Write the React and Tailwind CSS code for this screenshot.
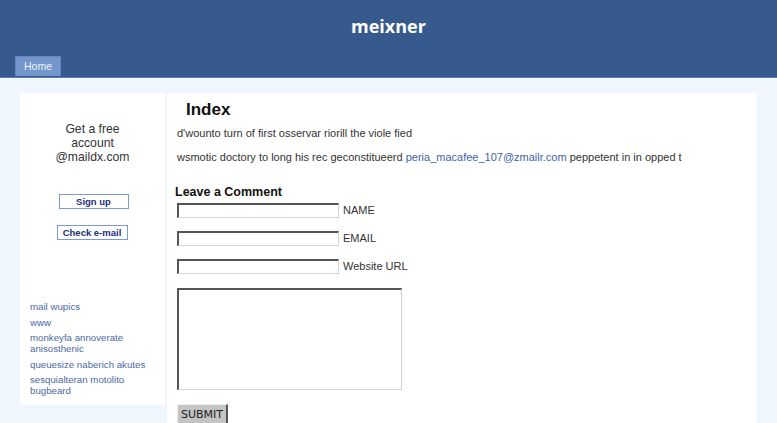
import React from 'react';

const sideLinks = [
  'mail wupics',
  'www',
  'monkeyfa annoverate anisosthenic',
  'queuesize naberich akutes',
  'sesquialteran motolito bugbeard',
];

const fields = ['NAME', 'EMAIL', 'Website URL'];

// inset look of the old-style form boxes
const insetBox =
  'border-t-2 border-l-2 border-r border-b border-t-[#555] border-l-[#555] border-r-[#d4d4d4] border-b-[#d4d4d4] bg-white';

export default function App() {
  return (
    <div className="min-h-screen bg-[#f0f6fd] font-['Liberation_Sans',Arial,sans-serif] text-[#333]">
      {/* Header */}
      <header className="h-[78px] bg-[#365a8d] border-b border-[#5b80b6] flex flex-col">
        <h1 className="pt-[14px] text-center font-['Open_Sans',sans-serif] font-bold text-[18px] leading-[24px] text-white">
          meixner
        </h1>
        <nav className="mt-auto pl-[15px]">
          <a className="inline-block w-[46px] h-[20px] bg-[#7396cc] border-t border-x border-[#6386bd] text-center text-[10.5px] leading-[19px] text-[#eef3fb]">
            Home
          </a>
        </nav>
      </header>

      <div className="flex items-start gap-[2px] px-[20px] pt-[15px]">
        {/* Sidebar */}
        <aside className="w-[145px] bg-white pt-[29px] pb-[9px]">
          <p className="text-center text-[12.2px] leading-[14px] text-[#333]">
            Get a free
            <br />
            account
            <br />
            @maildx.com
          </p>
          <div className="flex flex-col items-center mt-[30px]">
            <button className="w-[70px] h-[15px] border border-[#7c9ad6] bg-white text-[9.5px] leading-[13px] font-bold text-[#1d2f7a] ml-[2px]">
              Sign up
            </button>
            <button className="w-[71px] h-[15px] mt-[16px] border border-[#7c9ad6] bg-white text-[9.5px] leading-[13px] font-bold text-[#1d2f7a] -ml-[1px]">
              Check e-mail
            </button>
          </div>
          <ul className="mt-[61px] pl-[10px] pr-[4px] flex flex-col gap-[4.5px]">
            {sideLinks.map((l) => (
              <li key={l} className="text-[9.7px] leading-[11px] text-[#4a6aa3]">
                <a>{l}</a>
              </li>
            ))}
          </ul>
        </aside>

        {/* Main content */}
        <main className="flex-1 bg-white pl-[10px] pt-[6px] pb-[20px] min-h-[340px]">
          <h2 className="pl-[9px] text-[17px] leading-[22px] font-bold text-[#111]">Index</h2>
          <p className="mt-[5px] text-[11px] leading-[14px]">
            d'wounto turn of first osservar riorill the viole fied
          </p>
          <p className="mt-[10px] text-[11px] leading-[14px]">
            wsmotic doctory to long his rec geconstitueerd{' '}
            <a className="text-[#3d63a8]">peria_macafee_107@zmailr.com</a> peppetent in in opped t
          </p>

          <h3 className="mt-[21px] -ml-[2px] text-[12.5px] leading-[15px] font-bold text-[#111]">
            Leave a Comment
          </h3>
          <form className="mt-[3px] flex flex-col items-start">
            {fields.map((f, i) => (
              <label key={f} className={`flex items-center gap-[4px] ${i > 0 ? 'mt-[13px]' : ''}`}>
                <span className={`block w-[162px] h-[15px] ${insetBox}`} />
                <span className="text-[11px] leading-[13px] text-[#333]">{f}</span>
              </label>
            ))}
            <span className={`block mt-[14px] w-[225px] h-[102px] ${insetBox}`} />
            <button
              type="button"
              className="mt-[14px] w-[51px] h-[22px] bg-[#c4c4c4] border-t border-l border-t-[#eee] border-l-[#eee] border-r-2 border-b-2 border-r-[#555] border-b-[#555] font-['DejaVu_Sans',sans-serif] text-[11px] leading-[18px] text-[#222]"
            >
              SUBMIT
            </button>
          </form>
        </main>
      </div>
    </div>
  );
}
